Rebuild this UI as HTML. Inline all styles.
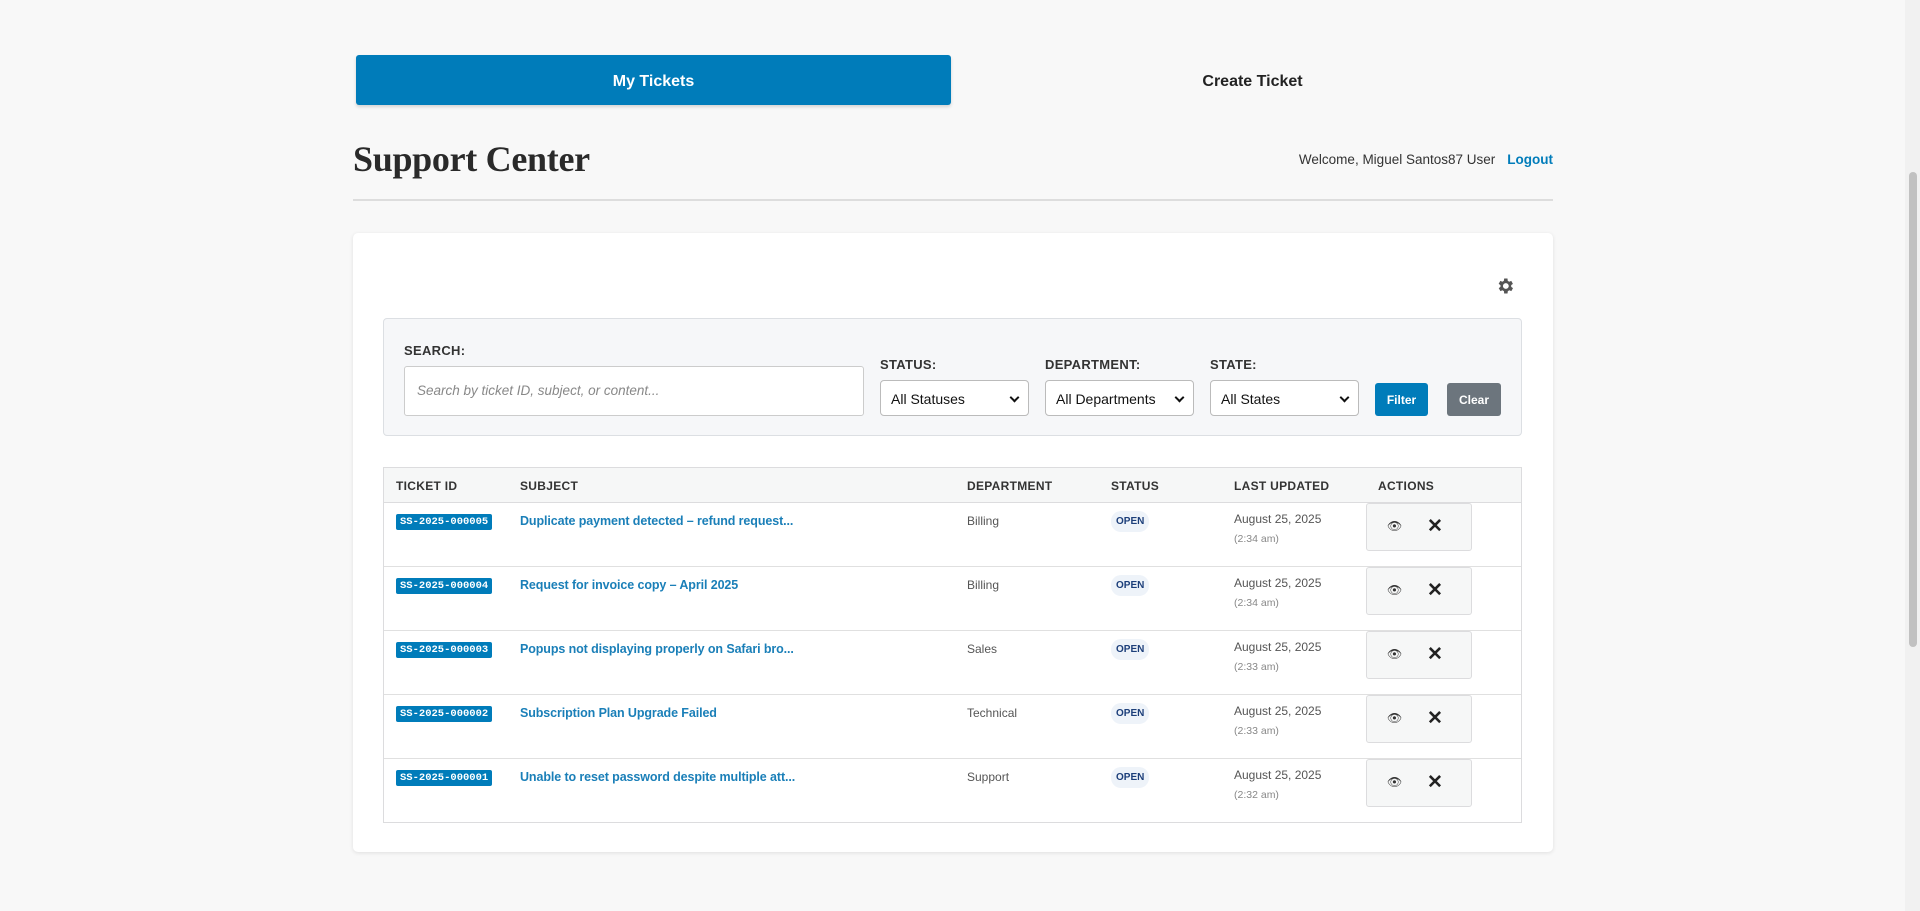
<!DOCTYPE html>
<html><head><meta charset="utf-8"><style>
*{box-sizing:border-box;margin:0;padding:0}
body{width:1920px;height:911px;overflow:hidden;background:#f8f8f8;font-family:"Liberation Sans",sans-serif;color:#333;position:relative}
.sb{position:absolute;right:0;top:0;width:15px;height:911px;background:#f1f1f1}
.sb div{position:absolute;left:4px;top:172px;width:8px;height:475px;background:#c1c1c1;border-radius:4px}
.tab{position:absolute;top:55px;height:50px;width:595px;display:flex;align-items:center;justify-content:center;font-weight:bold;font-size:16px;padding-top:3px}
.t1{left:356px;background:#007cba;color:#fff;border-radius:3px;box-shadow:0 2px 3px rgba(0,0,0,.15)}
.t2{left:955px;color:#222}
h1{position:absolute;left:353px;top:138px;font-family:"Liberation Serif",serif;font-weight:bold;font-size:36px;color:#2a2a2a;letter-spacing:-.3px}
.wel{position:absolute;right:367px;top:152px;font-size:13.5px;color:#333}
.wel a{color:#007cba;font-weight:bold;margin-left:12px;text-decoration:none}
.hr{position:absolute;left:353px;top:199px;width:1200px;height:2px;background:#ddd}
.card{position:absolute;left:353px;top:233px;width:1200px;height:619px;background:#fff;border-radius:5px;box-shadow:0 1px 4px rgba(0,0,0,.1)}
.gear{position:absolute;left:1495px;top:276px}
.fb{position:absolute;left:383px;top:318px;width:1139px;height:118px;background:#f6f7f9;border:1px solid #dcdfe3;border-radius:4px}
.lbl{position:absolute;font-size:13px;font-weight:bold;color:#333;letter-spacing:.3px}
.inp{position:absolute;left:404px;top:366px;width:460px;height:50px;background:#fff;border:1px solid #ccc;border-radius:3px;font-size:13.5px;font-style:italic;color:#888;padding:16px 12px}
.sel{position:absolute;top:380px;width:149px;height:36px;background:#fff;border:1px solid #bbb;border-radius:4px;font-size:14px;color:#111;padding:10px 0 0 10px}
.sel:after{content:"";position:absolute;right:10px;top:13px;width:5px;height:5px;border-right:2px solid #111;border-bottom:2px solid #111;transform:rotate(45deg)}
.btn{position:absolute;top:383px;height:33px;border-radius:3px;color:#fff;font-size:12px;font-weight:bold;display:flex;align-items:center;justify-content:center}
.tbl{position:absolute;left:383px;top:467px;width:1139px;height:356px;border:1px solid #dcdcde}
.th{position:absolute;left:0;top:0;width:100%;height:35px;background:#f6f7f7;border-bottom:1px solid #dcdcde}
.th span{position:absolute;top:11px;font-size:12px;font-weight:bold;color:#333;letter-spacing:.3px}
.row{position:absolute;left:0;width:100%;height:64px;border-bottom:1px solid #e0e0e0}
.id{position:absolute;left:12px;top:11px;background:#007cba;color:#fff;font-family:"Liberation Mono",monospace;font-weight:bold;font-size:10.5px;padding:2px 4px;border-radius:2px}
.sub{position:absolute;left:136px;top:11px;font-size:12.5px;font-weight:bold;color:#1a7fb8;letter-spacing:-.1px}
.dep{position:absolute;left:583px;top:11px;font-size:12px;color:#555}
.st{position:absolute;left:727px;top:8px;background:#eef3f9;color:#1d3f7a;font-size:10px;font-weight:bold;padding:5px 5px;border-radius:10px}
.dt{position:absolute;left:850px;top:9px;font-size:12px;color:#555}
.dt small{display:block;font-size:10.5px;color:#888;margin-top:7px}
.act{position:absolute;left:982px;top:0;width:106px;height:48px;border:1px solid #dcdcde;border-radius:3px;background:#f6f7f7}
.act .e{position:absolute;left:20px;top:15px;font-size:12px}
.act .x{position:absolute;left:60px;top:11px;font-size:19px;font-weight:bold;color:#222}
</style></head><body>
<div class="tab t1">My Tickets</div>
<div class="tab t2">Create Ticket</div>
<h1>Support Center</h1>
<div class="wel">Welcome, Miguel Santos87 User<a>Logout</a></div>
<div class="hr"></div>
<div class="card"></div>
<svg class="gear" width="20" height="20" viewBox="0 0 24 24"><path fill="#555" d="M19.4 13a7.5 7.5 0 0 0 0-2l2.1-1.6-2-3.5-2.5 1a7 7 0 0 0-1.7-1L15 3h-4l-.4 2.9a7 7 0 0 0-1.7 1l-2.5-1-2 3.5L6.6 11a7.5 7.5 0 0 0 0 2l-2.1 1.6 2 3.5 2.5-1a7 7 0 0 0 1.7 1L11 21h4l.4-2.9a7 7 0 0 0 1.7-1l2.5 1 2-3.5zM13 15.5a3.5 3.5 0 1 1 0-7 3.5 3.5 0 0 1 0 7z"/></svg>
<div class="fb"></div>
<div class="lbl" style="left:404px;top:343px">SEARCH:</div>
<div class="inp">Search by ticket ID, subject, or content...</div>
<div class="lbl" style="left:880px;top:357px">STATUS:</div>
<div class="lbl" style="left:1045px;top:357px">DEPARTMENT:</div>
<div class="lbl" style="left:1210px;top:357px">STATE:</div>
<div class="sel" style="left:880px">All Statuses</div>
<div class="sel" style="left:1045px">All Departments</div>
<div class="sel" style="left:1210px">All States</div>
<div class="btn" style="left:1375px;width:53px;background:#007cba">Filter</div>
<div class="btn" style="left:1447px;width:54px;background:#6c757d">Clear</div>
<div class="tbl">
<div class="th"><span style="left:12px">TICKET ID</span><span style="left:136px">SUBJECT</span><span style="left:583px">DEPARTMENT</span><span style="left:727px">STATUS</span><span style="left:850px">LAST UPDATED</span><span style="left:994px">ACTIONS</span></div>
<div style="position:absolute;left:0;top:35px;width:100%">
<div class="row" style="top:0"><span class="id">SS-2025-000005</span><span class="sub">Duplicate payment detected – refund request...</span><span class="dep">Billing</span><span class="st">OPEN</span><span class="dt">August 25, 2025<small>(2:34 am)</small></span><div class="act"><span class="e">👁</span><span class="x">✕</span></div></div>
<div class="row" style="top:64px"><span class="id">SS-2025-000004</span><span class="sub">Request for invoice copy – April 2025</span><span class="dep">Billing</span><span class="st">OPEN</span><span class="dt">August 25, 2025<small>(2:34 am)</small></span><div class="act"><span class="e">👁</span><span class="x">✕</span></div></div>
<div class="row" style="top:128px"><span class="id">SS-2025-000003</span><span class="sub">Popups not displaying properly on Safari bro...</span><span class="dep">Sales</span><span class="st">OPEN</span><span class="dt">August 25, 2025<small>(2:33 am)</small></span><div class="act"><span class="e">👁</span><span class="x">✕</span></div></div>
<div class="row" style="top:192px"><span class="id">SS-2025-000002</span><span class="sub">Subscription Plan Upgrade Failed</span><span class="dep">Technical</span><span class="st">OPEN</span><span class="dt">August 25, 2025<small>(2:33 am)</small></span><div class="act"><span class="e">👁</span><span class="x">✕</span></div></div>
<div class="row" style="top:256px;border-bottom:none"><span class="id">SS-2025-000001</span><span class="sub">Unable to reset password despite multiple att...</span><span class="dep">Support</span><span class="st">OPEN</span><span class="dt">August 25, 2025<small>(2:32 am)</small></span><div class="act"><span class="e">👁</span><span class="x">✕</span></div></div>
</div></div>
<div class="sb"><div></div></div>
</body></html>
